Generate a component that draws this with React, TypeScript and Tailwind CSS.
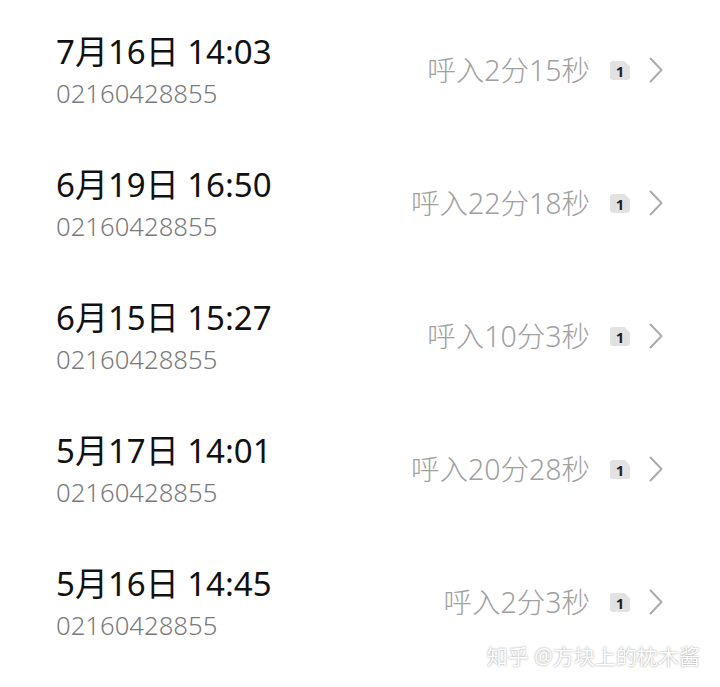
const calls = [
  { date: "7月16日 14:03", num: "02160428855", dur: "呼入2分15秒" },
  { date: "6月19日 16:50", num: "02160428855", dur: "呼入22分18秒" },
  { date: "6月15日 15:27", num: "02160428855", dur: "呼入10分3秒" },
  { date: "5月17日 14:01", num: "02160428855", dur: "呼入20分28秒" },
  { date: "5月16日 14:45", num: "02160428855", dur: "呼入2分3秒" },
];

function SimBadge() {
  return (
    <svg width="20" height="19" viewBox="0 0 20 19" className="shrink-0">
      <path d="M3 0 H14.5 L20 5.5 V16 Q20 19 17 19 H3 Q0 19 0 16 V3 Q0 0 3 0 Z" fill="#e2e2e2" />
      <text x="10" y="15.5" textAnchor="middle" fontSize="15" fontWeight="700" fill="#1e1e1e" fontFamily="'Noto Sans', sans-serif">
        1
      </text>
    </svg>
  );
}

function Chevron() {
  return (
    <svg width="14" height="26" viewBox="0 0 14 26" className="shrink-0">
      <polyline points="1.5,1.5 12.5,13 1.5,24.5" fill="none" stroke="#ababab" strokeWidth="2" strokeLinecap="round" strokeLinejoin="round" />
    </svg>
  );
}

export default function App() {
  return (
    <div
      className="relative w-[720px] h-[687px] bg-white overflow-hidden pt-[6px]"
      style={{ fontFamily: "'Noto Sans', 'Noto Sans CJK SC', sans-serif" }}
    >
      {calls.map((c, i) => (
        <div key={i} className="h-[133px] flex items-start pl-[56px] pr-[57px]">
          <div className="flex flex-col pt-[25px]">
            <div className="text-[33px] leading-[42px] text-[#111]">{c.date}</div>
            <div className="mt-[4px] text-[25.7px] leading-[34px] font-light text-[#7a7a7a]">{c.num}</div>
          </div>
          <div className="ml-auto mt-[46px] flex items-center">
            <span className="text-[28.5px] leading-[36px] font-light text-[#a0a0a0]">{c.dur}</span>
            <span className="ml-[20px] flex">
              <SimBadge />
            </span>
            <span className="ml-[19px] flex">
              <Chevron />
            </span>
          </div>
        </div>
      ))}
      <div
        className="absolute right-[20px] bottom-[17px] text-[21px] leading-[28px] text-white"
        style={{ textShadow: "0 0 2px rgba(0,0,0,0.45)" }}
      >
        知乎 @方块上的枕木酱
      </div>
    </div>
  );
}
